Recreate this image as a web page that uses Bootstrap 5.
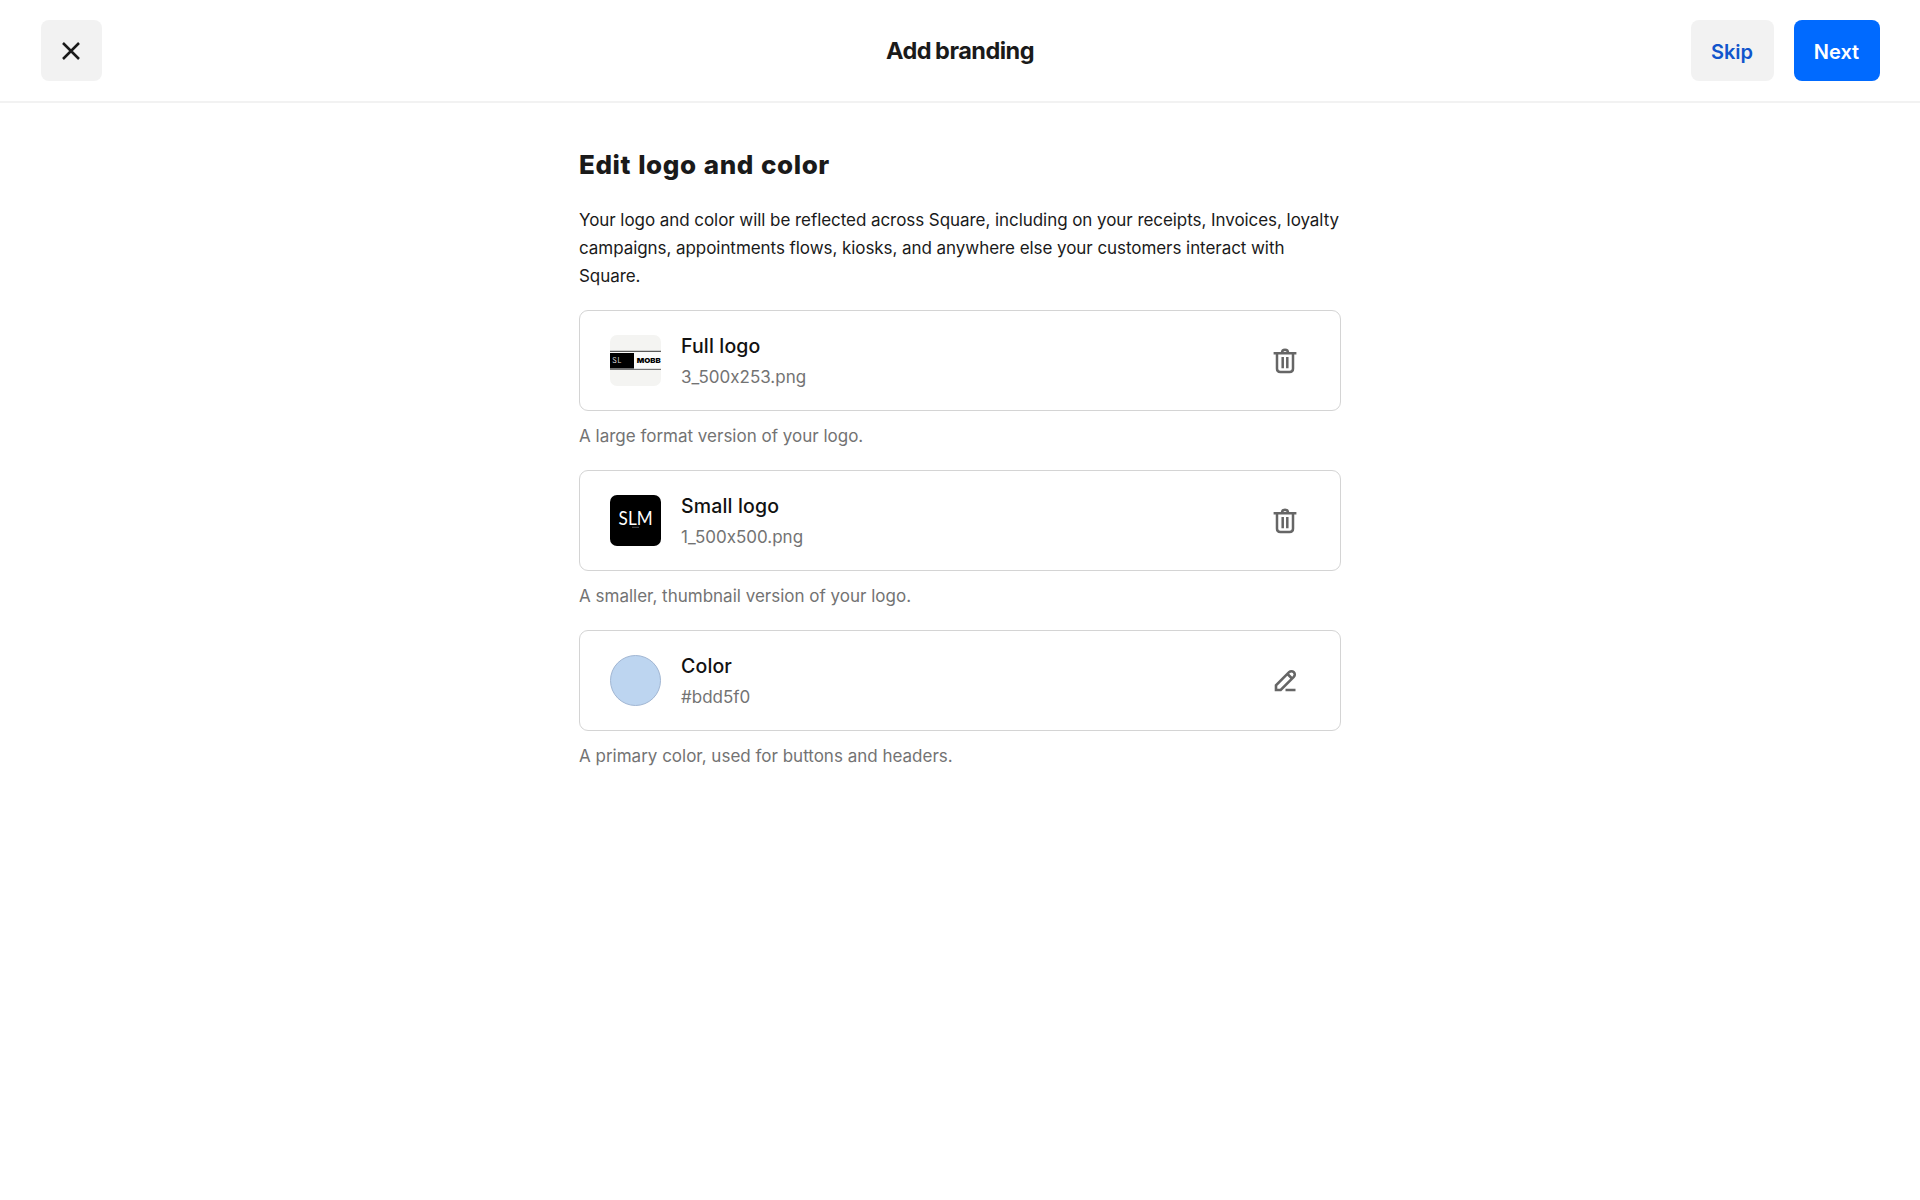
<!DOCTYPE html>
<html lang="en">
  <head>
    <meta charset="UTF-8" />
    <meta name="viewport" content="width=device-width, initial-scale=1" />
    <title>Add branding</title>
    <link
      href="https://cdn.jsdelivr.net/npm/bootstrap@5.3.3/dist/css/bootstrap.min.css"
      rel="stylesheet"
    />
    <style>
      body {
        font-family: Inter, "Liberation Sans", sans-serif;
        font-feature-settings: "calt" 0;
        font-size: 17px;
        line-height: 28px;
        color: #1a1a1a;
      }
      .top-bar {
        height: 103px;
        padding: 20px 40.5px 0 40.5px;
        border-bottom: 2px solid #f2f2f2;
      }
      .top-bar .btn {
        height: 61px;
        border: 0;
        border-radius: 8px;
        font-size: 20px;
        font-weight: 600;
        padding: 2px 0 0;
      }
      .top-side {
        flex: 1 1 0;
        gap: 20px;
      }
      .top-bar .btn-close-page {
        width: 61px;
        padding: 0 1px 0 0;
        background: #f2f2f2;
      }
      .btn-skip {
        width: 83px;
        background: #f2f2f2;
        color: #1155cc;
      }
      .btn-next {
        width: 86px;
        background: #006aff;
        color: #fff;
      }
      .page-title {
        font-size: 23.5px;
        font-weight: 650;
        line-height: 61px;
        letter-spacing: -0.5px;
        word-spacing: -1px;
      }
      .brand-form {
        width: 762px;
        padding-top: 44px;
      }
      .form-title {
        font-size: 26px;
        font-weight: 800;
        line-height: 36px;
        letter-spacing: 0.55px;
        word-spacing: 1px;
        margin-bottom: 23px;
      }
      .intro {
        height: 84px;
        margin-bottom: 20px;
        white-space: nowrap;
        letter-spacing: -0.06px;
      }
      .brand-item {
        height: 101px;
        border: 1px solid #d4d4d4;
        border-radius: 9px;
        padding: 0 42px 0 29.5px;
      }
      .item-name {
        font-size: 19.5px;
        font-weight: 500;
        line-height: 30px;
        letter-spacing: 0.15px;
        padding-top: 4px;
        color: #111;
      }
      .item-value {
        line-height: 33px;
        color: #737373;
      }
      .item-note {
        height: 59px;
        padding-top: 11px;
        color: #737373;
      }
      .item-info {
        margin-left: 20.5px;
      }
      .icon-btn {
        line-height: 0;
      }
    </style>
  </head>
  <body class="bg-white">
    <header class="top-bar d-flex align-items-start">
      <div class="top-side d-flex">
        <button class="btn btn-close-page d-flex align-items-center justify-content-center" aria-label="Close">
          <svg width="20" height="20" viewBox="0 0 20 20" fill="none" stroke="#1a1a1a" stroke-width="2.5">
            <path d="M2 2L18 18M18 2L2 18" />
          </svg>
        </button>
      </div>
      <h1 class="page-title mb-0">Add branding</h1>
      <div class="top-side d-flex justify-content-end">
        <button class="btn btn-skip">Skip</button>
        <button class="btn btn-next">Next</button>
      </div>
    </header>

    <main class="brand-form mx-auto">
      <h2 class="form-title">Edit logo and color</h2>
      <p class="intro">
        Your logo and color will be reflected across Square, including on your receipts, Invoices, loyalty<br />
        campaigns, appointments flows, kiosks, and anywhere else your customers interact with<br />
        Square.
      </p>

      <!-- Full logo -->
      <div class="brand-item d-flex align-items-center">
        <svg class="flex-shrink-0" width="51" height="51" viewBox="0 0 51 51">
          <defs>
            <clipPath id="thumb"><rect width="51" height="51" rx="7" /></clipPath>
          </defs>
          <g clip-path="url(#thumb)">
            <rect width="51" height="51" fill="#f4f4f2" />
            <rect y="16" width="51" height="19" fill="#fbfbfa" />
            <rect y="15.8" width="51" height="1" fill="#333" />
            <rect y="33.8" width="51" height="1.2" fill="#777" />
            <rect y="18" width="24" height="15.5" fill="#000" />
            <text x="2.3" y="28" font-size="7" fill="#ddd" letter-spacing="0.8">SL</text>
            <text x="26.8" y="28" font-size="6.8" font-weight="900" fill="#000" textLength="24" lengthAdjust="spacingAndGlyphs">MOBB</text>
          </g>
        </svg>
        <div class="item-info flex-grow-1">
          <div class="item-name">Full logo</div>
          <div class="item-value">3_500x253.png</div>
        </div>
        <button class="btn icon-btn border-0 p-0" aria-label="Delete full logo">
          <svg width="26" height="26" viewBox="0 0 26 26" fill="none" stroke="#666" stroke-width="2.5">
            <path d="M1.6 5.2H24.4M10 4.7C10 0.6 16 0.6 16 4.7M5 5.2V20.7Q5 23.9 8.4 23.9H17.6Q21 23.9 21 20.7V5.2M10.7 9V20.2M15.3 9V20.2" />
          </svg>
        </button>
      </div>
      <div class="item-note">A large format version of your logo.</div>

      <!-- Small logo -->
      <div class="brand-item d-flex align-items-center">
        <svg class="flex-shrink-0" width="51" height="51" viewBox="0 0 51 51">
          <rect width="51" height="51" rx="7" fill="#000" />
          <text x="8.6" y="30" font-size="19" fill="#fff" font-family="Lato, sans-serif" textLength="34" lengthAdjust="spacingAndGlyphs">SLM</text>
          <path d="M22 32.3H29" stroke="#555" stroke-width="1" />
        </svg>
        <div class="item-info flex-grow-1">
          <div class="item-name">Small logo</div>
          <div class="item-value">1_500x500.png</div>
        </div>
        <button class="btn icon-btn border-0 p-0" aria-label="Delete small logo">
          <svg width="26" height="26" viewBox="0 0 26 26" fill="none" stroke="#666" stroke-width="2.5">
            <path d="M1.6 5.2H24.4M10 4.7C10 0.6 16 0.6 16 4.7M5 5.2V20.7Q5 23.9 8.4 23.9H17.6Q21 23.9 21 20.7V5.2M10.7 9V20.2M15.3 9V20.2" />
          </svg>
        </button>
      </div>
      <div class="item-note">A smaller, thumbnail version of your logo.</div>

      <!-- Color -->
      <div class="brand-item d-flex align-items-center">
        <svg class="flex-shrink-0" width="51" height="51" viewBox="0 0 51 51">
          <circle cx="25.5" cy="25.5" r="25" fill="#bdd5f0" stroke="#a0b5d2" />
        </svg>
        <div class="item-info flex-grow-1">
          <div class="item-name">Color</div>
          <div class="item-value">#bdd5f0</div>
        </div>
        <button class="btn icon-btn border-0 p-0" aria-label="Edit color">
          <svg width="26" height="26" viewBox="0 0 26 26" fill="none" stroke="#666" stroke-width="2.6">
            <path d="M4 22V17.3L17.1 4.2A3.1 3.1 0 0 1 21.8 8.9L8.7 22ZM15.5 6L20 10.5M13.5 22H23.5" />
          </svg>
        </button>
      </div>
      <div class="item-note">A primary color, used for buttons and headers.</div>
    </main>

    <script src="https://cdn.jsdelivr.net/npm/bootstrap@5.3.3/dist/js/bootstrap.bundle.min.js"></script>
  </body>
</html>
